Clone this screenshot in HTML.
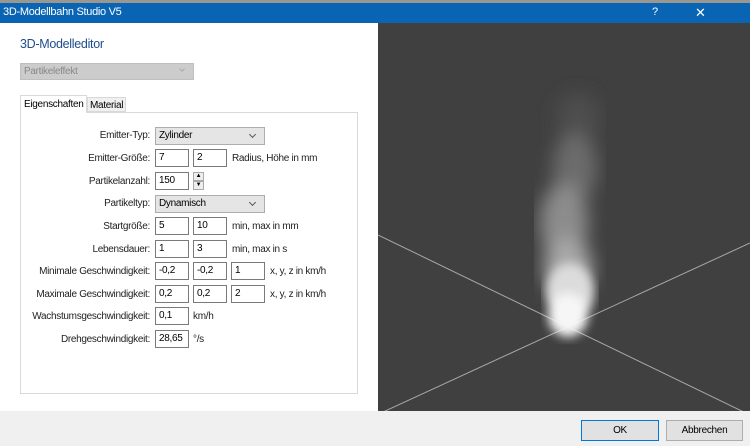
<!DOCTYPE html>
<html><head><meta charset="utf-8"><style>
*{box-sizing:border-box;margin:0;padding:0}
body{width:750px;height:446px;overflow:hidden;background:#fff;font-family:"Liberation Sans",sans-serif;font-size:10px;letter-spacing:-0.3px;color:#000;position:relative}
.a{position:absolute}
.lbl{position:absolute;right:600px;text-align:right;white-space:nowrap;color:#222}
.in{position:absolute;height:18px;border:1px solid #7a7a7a;background:#fff;padding:0 3px;line-height:16px}
.cb{position:absolute;height:18px;border:1px solid #adadad;background:#e5e5e5;padding:0 3px;line-height:16px}
.cb:after{content:"";position:absolute;right:9px;top:4px;width:4px;height:4px;border-right:1px solid #555;border-bottom:1px solid #555;transform:rotate(45deg)}
.u{position:absolute;white-space:nowrap;color:#222}
</style></head><body>
<div class="a" style="left:0;top:0;width:750px;height:3px;background:#9a9690"></div>
<div class="a" style="left:0;top:3px;width:750px;height:20px;background:#0a64b4;color:#fff;font-size:11px;line-height:19px;padding-left:3px">3D-Modellbahn Studio V5</div>
<div class="a" style="left:652px;top:3px;color:#fff;font-size:11px;line-height:19px">?</div>
<div class="a" style="left:695px;top:3px;color:#fff;font-size:13px;line-height:19px">✕</div>
<div class="a" style="left:378px;top:23px;width:372px;height:388px;background:#404040;overflow:hidden">
<svg width="372" height="388" style="position:absolute;left:0;top:0">
<defs><filter id="b"><feGaussianBlur stdDeviation="9"/></filter><filter id="b2"><feGaussianBlur stdDeviation="5"/></filter></defs>
<line x1="0" y1="212" x2="372" y2="392" stroke="#a8a8a8" stroke-width="1"/>
<line x1="5" y1="389" x2="372" y2="220" stroke="#a8a8a8" stroke-width="1"/>
<g filter="url(#b)">
<ellipse cx="200" cy="95" rx="22" ry="25" fill="#4e4e4e"/>
<ellipse cx="197" cy="145" rx="22" ry="35" fill="#6c6c6c"/>
<ellipse cx="186" cy="200" rx="24" ry="40" fill="#8c8c8c"/>
<ellipse cx="190" cy="245" rx="24" ry="30" fill="#a8a8a8"/>
</g>
<g filter="url(#b2)">
<ellipse cx="192" cy="270" rx="24" ry="30" fill="#dcdcdc"/>
<ellipse cx="190" cy="292" rx="20" ry="22" fill="#f6f6f6"/>
</g>
</svg></div>
<div class="a" style="left:20px;top:37px;font-size:12.5px;color:#1f4e8c">3D-Modelleditor</div>
<div class="a" style="left:20px;top:63px;width:174px;height:17px;background:#cccccc;border:1px solid #bfbfbf;color:#888;padding:2px 3px;line-height:11px">Partikeleffekt<span style="position:absolute;right:9px;top:3px;width:4px;height:4px;border-right:1px solid #aaa;border-bottom:1px solid #aaa;transform:rotate(45deg)"></span></div>
<div class="a" style="left:20px;top:112px;width:338px;height:282px;border:1px solid #d9d9d9"></div>
<div class="a" style="left:20px;top:95px;width:67px;height:18px;border:1px solid #d9d9d9;border-bottom:none;background:#fff;padding:3px 3px;line-height:11px;white-space:nowrap">Eigenschaften</div>
<div class="a" style="left:87px;top:97px;width:39px;height:15px;border:1px solid #d9d9d9;background:#f0f0f0;padding:2px 2px;line-height:11px">Material</div>

<div class="lbl" style="top:130px">Emitter-Typ:</div><div class="cb" style="left:155px;top:127px;width:110px">Zylinder</div>
<div class="lbl" style="top:153px">Emitter-Größe:</div><div class="in" style="left:155px;top:149px;width:34px">7</div><div class="in" style="left:193px;top:149px;width:34px">2</div><div class="u" style="left:232px;top:153px">Radius, Höhe in mm</div>
<div class="lbl" style="top:176px">Partikelanzahl:</div><div class="in" style="left:155px;top:172px;width:34px">150</div>
<div class="a" style="left:193px;top:172px;width:11px;height:9px;border:1px solid #aaa;background:#eee;font-size:6px;line-height:7px;text-align:center">▲</div><div class="a" style="left:193px;top:181px;width:11px;height:9px;border:1px solid #aaa;background:#eee;font-size:6px;line-height:7px;text-align:center">▼</div>
<div class="lbl" style="top:198px">Partikeltyp:</div><div class="cb" style="left:155px;top:195px;width:110px">Dynamisch</div>
<div class="lbl" style="top:221px">Startgröße:</div><div class="in" style="left:155px;top:217px;width:34px">5</div><div class="in" style="left:193px;top:217px;width:34px">10</div><div class="u" style="left:232px;top:221px">min, max in mm</div>
<div class="lbl" style="top:244px">Lebensdauer:</div><div class="in" style="left:155px;top:240px;width:34px">1</div><div class="in" style="left:193px;top:240px;width:34px">3</div><div class="u" style="left:232px;top:244px">min, max in s</div>
<div class="lbl" style="top:266px">Minimale Geschwindigkeit:</div><div class="in" style="left:155px;top:262px;width:34px">-0,2</div><div class="in" style="left:193px;top:262px;width:34px">-0,2</div><div class="in" style="left:231px;top:262px;width:34px">1</div><div class="u" style="left:270px;top:266px">x, y, z in km/h</div>
<div class="lbl" style="top:289px">Maximale Geschwindigkeit:</div><div class="in" style="left:155px;top:285px;width:34px">0,2</div><div class="in" style="left:193px;top:285px;width:34px">0,2</div><div class="in" style="left:231px;top:285px;width:34px">2</div><div class="u" style="left:270px;top:289px">x, y, z in km/h</div>
<div class="lbl" style="top:311px">Wachstumsgeschwindigkeit:</div><div class="in" style="left:155px;top:307px;width:34px">0,1</div><div class="u" style="left:193px;top:311px">km/h</div>
<div class="lbl" style="top:334px">Drehgeschwindigkeit:</div><div class="in" style="left:155px;top:330px;width:34px">28,65</div><div class="u" style="left:193px;top:334px">°/s</div>

<div class="a" style="left:0;top:411px;width:750px;height:35px;background:#f0f0f0"></div>
<div class="a" style="left:581px;top:420px;width:78px;height:21px;border:1px solid #0078d7;background:#e1e1e1;text-align:center;line-height:19px">OK</div>
<div class="a" style="left:666px;top:420px;width:77px;height:21px;border:1px solid #adadad;background:#e1e1e1;text-align:center;line-height:19px">Abbrechen</div>
</body></html>
